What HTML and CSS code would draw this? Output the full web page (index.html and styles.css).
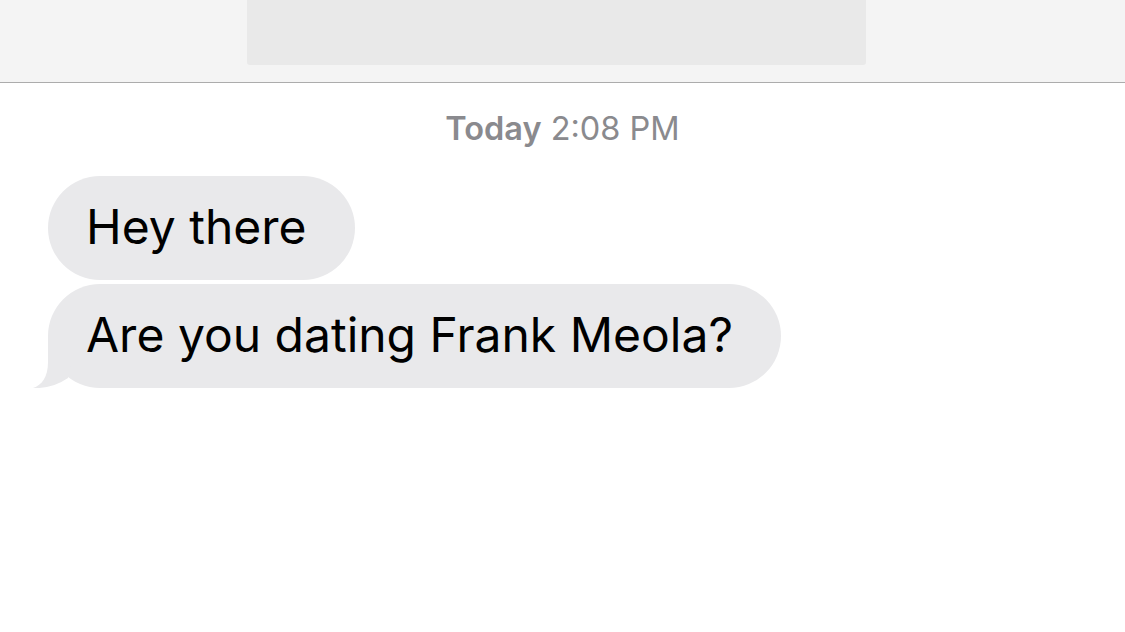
FILE: index.html
```html
<!DOCTYPE html>
<html>
<head>
<meta charset="utf-8">
<link rel="stylesheet" href="styles.css">
</head>
<body>
<header class="topbar">
  <div class="topbar-box"></div>
</header>
<main class="thread">
  <div class="stamp"><span class="stamp-day">Today</span> 2:08 PM</div>
  <div class="messages">
    <div class="bubble"><span class="bubble-text">Hey there</span></div>
    <div class="bubble bubble-last">
      <span class="bubble-text">Are you dating Frank Meola?</span>
      <svg class="tail" viewBox="-16 -52 50 52" width="50" height="52" aria-hidden="true">
        <path d="M0 -52 L0 -26 C0 -11 -6 -3 -15 0 Q4 1 20 -10 L30 -52 Z" fill="#e9e9eb"/>
      </svg>
    </div>
  </div>
</main>
</body>
</html>
```
FILE: styles.css
```css
html, body {
  margin: 0;
  padding: 0;
  background: #ffffff;
}
body {
  width: 1125px;
  height: 632px;
  overflow: hidden;
  font-family: Inter, "Liberation Sans", sans-serif;
}
.topbar {
  height: 82px;
  background: #f4f4f4;
  border-bottom: 1px solid #acacac;
  display: flex;
  justify-content: flex-start;
  padding-left: 247px;
  box-sizing: content-box;
}
.topbar-box {
  width: 619px;
  height: 65px;
  background: #e9e9e9;
  border-radius: 0 0 3px 3px;
}
.thread {
  display: flex;
  flex-direction: column;
}
.stamp {
  margin-top: 24px;
  height: 44px;
  line-height: 44px;
  text-align: center;
  font-size: 32.5px;
  color: #8a8a8e;
}
.stamp-day {
  font-weight: 600;
}
.messages {
  margin-top: 25px;
  padding-left: 48px;
  display: flex;
  flex-direction: column;
  align-items: flex-start;
  gap: 4px;
}
.bubble {
  position: relative;
  height: 104px;
  border-radius: 52px;
  background: #e9e9eb;
  padding: 0 48px 0 38px;
  display: flex;
  align-items: center;
  box-sizing: border-box;
}
.bubble-text {
  font-size: 48px;
  color: #000000;
  line-height: 1;
  padding-bottom: 2px;
}
.tail {
  position: absolute;
  left: -16px;
  bottom: 0;
  display: block;
}
```
